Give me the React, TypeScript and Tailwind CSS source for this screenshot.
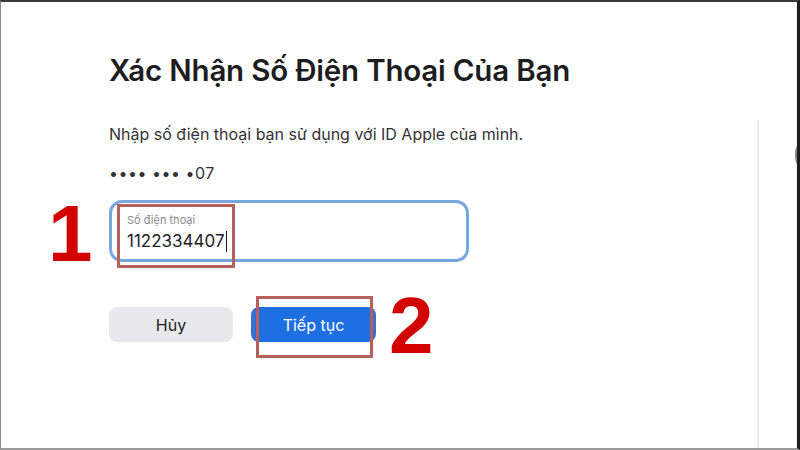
import React from "react";

const FONT = { fontFamily: 'Inter, "Noto Sans", "Liberation Sans", sans-serif' };

export default function App() {
  return (
    <div
      className="relative w-[800px] h-[450px] overflow-hidden bg-white border-t-2 border-t-[#3a3a3a] border-l border-l-[#8a8a8a] border-r-[3px] border-r-[#1e1e1e] border-b-2 border-b-[#9a9a9a] text-[#1d1d1f]"
      style={FONT}
    >
      <div className="flex h-full">
        {/* dialog content */}
        <div className="flex-1 pl-[108px] pt-[50px]">
          <h1 className="text-[29.5px] leading-[36px] font-semibold tracking-[-0.2px] text-[#1d1d1f]">
            Xác Nhận Số Điện Thoại Của Bạn
          </h1>
          <p className="mt-[36px] text-[16px] leading-[20px] text-[#333]">
            Nhập số điện thoại bạn sử dụng với ID Apple của mình.
          </p>
          <p className="mt-[19px] text-[16px] leading-[20px] text-[#333] tracking-[0.5px]">
            •••• ••• •07
          </p>

          <div className="mt-[17px] w-[360px] h-[62px] rounded-[13px] border-[3px] border-[#78a7de] pl-[15px] pt-[10px]">
            <div className="text-[11px] leading-[14px] text-[#8a8a8e]">Số điện thoại</div>
            <div className="mt-[3px] flex items-center text-[17px] leading-[22px] text-[#1d1d1f]">
              1122334407
              <span className="ml-[1px] w-px h-[21px] bg-[#1d1d1f]" />
            </div>
          </div>

          <div className="mt-[45px] flex gap-[18px]">
            <button className="w-[124px] h-[35px] rounded-[8px] bg-[#e8e8ed] text-[16px] text-[#1d1d1f]">
              Hủy
            </button>
            <button className="w-[125px] h-[35px] rounded-[8px] bg-[#1d6fe2] border-x-[4px] border-x-[#3f6fc6] text-[16px] text-white">
              Tiếp tục
            </button>
          </div>
        </div>

        {/* right divider */}
        <div className="mt-[118px] w-[2px] bg-[#ececec]" />
        <div className="w-[37px]" />
        <div className="w-px bg-[#f0f0f0]" />
      </div>

      {/* partial control on the right edge */}
      <div className="absolute left-[794px] top-[136px] w-[30px] h-[34px] rounded-full border-[3px] border-[#8a8a8a]" />

      {/* annotations */}
      <div
        className="absolute left-[47px] top-[192px] text-[80px] leading-[80px] font-bold tracking-[-4px] text-[#d30000]"
        style={{ fontFamily: '"Liberation Sans", Arial, sans-serif' }}
      >
        1
      </div>
      <div className="absolute left-[116px] top-[202px] w-[118px] h-[64px] border-[3px] border-[#b5605b]" />
      <div className="absolute left-[255px] top-[294px] w-[117px] h-[62px] border-[3px] border-[#b5605b]" />
      <div
        className="absolute left-[388px] top-[284px] text-[80px] leading-[80px] font-bold text-[#d30000]"
        style={{ fontFamily: '"Liberation Sans", Arial, sans-serif' }}
      >
        2
      </div>
    </div>
  );
}
